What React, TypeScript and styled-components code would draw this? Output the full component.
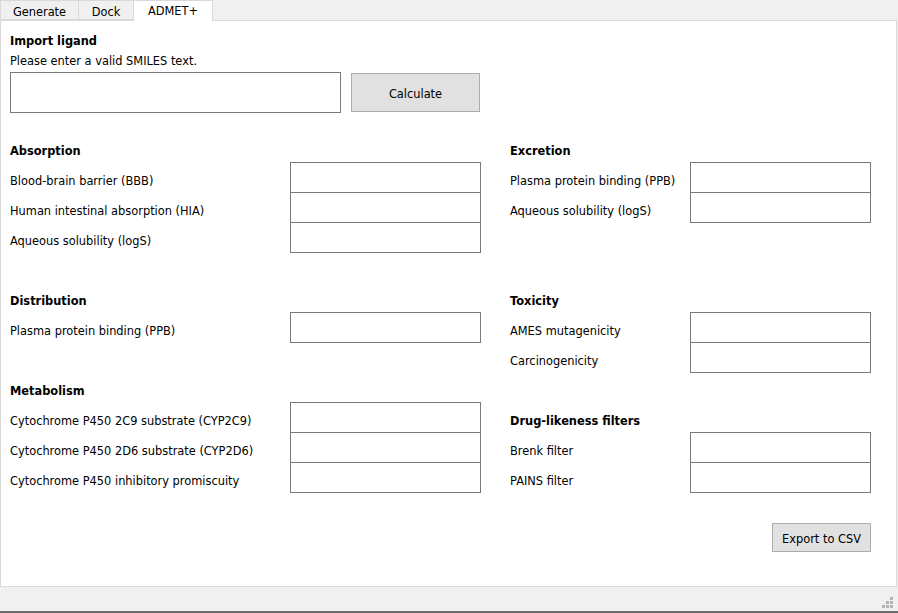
import React from "react";
import styled, { createGlobalStyle } from "styled-components";

const GlobalStyle = createGlobalStyle`
  html, body {
    margin: 0;
    padding: 0;
    background: #f0f0f0;
  }
  body {
    font-family: "DejaVu Sans", Verdana, sans-serif;
    font-size: 11.4px;
    color: #000;
  }
`;

type SectionData = { title: string; fields: string[]; slots?: number };

const leftSections: SectionData[] = [
  {
    title: "Absorption",
    fields: [
      "Blood-brain barrier (BBB)",
      "Human intestinal absorption (HIA)",
      "Aqueous solubility (logS)"
    ]
  },
  { title: "Distribution", fields: ["Plasma protein binding (PPB)"] },
  {
    title: "Metabolism",
    fields: [
      "Cytochrome P450 2C9 substrate (CYP2C9)",
      "Cytochrome P450 2D6 substrate (CYP2D6)",
      "Cytochrome P450 inhibitory promiscuity"
    ]
  }
];

const rightSections: SectionData[] = [
  {
    title: "Excretion",
    fields: ["Plasma protein binding (PPB)", "Aqueous solubility (logS)"],
    slots: 3
  },
  {
    title: "Toxicity",
    fields: ["AMES mutagenicity", "Carcinogenicity"]
  },
  {
    title: "Drug-likeness filters",
    fields: ["Brenk filter", "PAINS filter"]
  }
];

const tabs = [
  { name: "Generate", width: 79 },
  { name: "Dock", width: 56 },
  { name: "ADMET+", width: 80 }
];

function Section({
  data,
  labelWidth,
  boxWidth
}: {
  data: SectionData;
  labelWidth: number;
  boxWidth: number;
}) {
  return (
    <SectionBox>
      <SectionHeading>{data.title}</SectionHeading>
      <FieldList $slots={data.slots || data.fields.length}>
        {data.fields.map(f => (
          <FieldRow key={f}>
            <FieldLabel $width={labelWidth}>{f}</FieldLabel>
            <ValueBox $width={boxWidth} />
          </FieldRow>
        ))}
      </FieldList>
    </SectionBox>
  );
}

export default function App() {
  return (
    <>
      <GlobalStyle />
      <Window>
        <TabBar>
          {tabs.map(t => (
            <Tab key={t.name} $width={t.width} $active={t.name === "ADMET+"}>
              {t.name}
            </Tab>
          ))}
        </TabBar>
        <Panel>
          <Heading>Import ligand</Heading>
          <Hint>Please enter a valid SMILES text.</Hint>
          <ImportRow>
            <SmilesInput />
            <PushButton $width={129} $height={39}>
              Calculate
            </PushButton>
          </ImportRow>
          <Columns>
            <Column>
              {leftSections.map(s => (
                <Section key={s.title} data={s} labelWidth={280} boxWidth={191} />
              ))}
            </Column>
            <Column>
              {rightSections.map(s => (
                <Section key={s.title} data={s} labelWidth={180} boxWidth={181} />
              ))}
            </Column>
          </Columns>
          <Footer>
            <PushButton $width={99} $height={29}>
              Export to CSV
            </PushButton>
          </Footer>
        </Panel>
        <StatusBar>
          <Grip width="12" height="12" viewBox="0 0 12 12">
            {[
              [8, 0],
              [4, 4],
              [8, 4],
              [0, 8],
              [4, 8],
              [8, 8]
            ].map(([x, y]) => (
              <rect key={`${x}-${y}`} x={x} y={y} width="3" height="3" fill="#b4b4b4" />
            ))}
          </Grip>
        </StatusBar>
      </Window>
    </>
  );
}

const Window = styled.div`
  width: 898px;
  height: 613px;
  display: flex;
  flex-direction: column;
  background: #f0f0f0;
  overflow: hidden;
`;

const TabBar = styled.div`
  height: 20px;
  display: flex;
  align-items: stretch;
  position: relative;
  z-index: 1;
`;

const Tab = styled.div<{ $width: number; $active?: boolean }>`
  width: ${p => p.$width}px;
  box-sizing: border-box;
  display: flex;
  align-items: center;
  justify-content: center;
  padding-top: ${p => (p.$active ? "0" : "3px")};
  height: ${p => (p.$active ? "21px" : "20px")};
  background: ${p => (p.$active ? "#ffffff" : "#f0f0f0")};
  border: 1px solid #d9d9d9;
  border-bottom: ${p => (p.$active ? "none" : "1px solid #d9d9d9")};
  margin-right: -1px;
`;

const Panel = styled.div`
  width: 897px;
  height: 567px;
  box-sizing: border-box;
  background: #ffffff;
  border: 1px solid #d9d9d9;
  padding: 10px 0 0 9px;
  display: flex;
  flex-direction: column;
`;

const Heading = styled.div`
  font-weight: bold;
  height: 20px;
  line-height: 20px;
`;

const SectionHeading = styled(Heading)`
  line-height: 22px;
`;

const Hint = styled.div`
  height: 20px;
  line-height: 20px;
`;

const ImportRow = styled.div`
  display: flex;
  align-items: center;
  gap: 10px;
  margin-top: 1px;
`;

const SmilesInput = styled.div`
  width: 331px;
  height: 41px;
  box-sizing: border-box;
  border: 1px solid #7a7a7a;
  background: #fff;
`;

const PushButton = styled.div<{ $width: number; $height: number }>`
  width: ${p => p.$width}px;
  height: ${p => p.$height}px;
  box-sizing: border-box;
  background: #e1e1e1;
  border: 1px solid #adadad;
  display: flex;
  align-items: center;
  justify-content: center;
  padding-top: 2px;
`;

const Columns = styled.div`
  display: flex;
  gap: 29px;
  margin-top: 27px;
`;

const Column = styled.div`
  display: flex;
  flex-direction: column;
  gap: 38px;
`;

const SectionBox = styled.div`
  display: flex;
  flex-direction: column;
  gap: 2px;
`;

const FieldList = styled.div<{ $slots: number }>`
  min-height: ${p => p.$slots * 30}px;
`;

const FieldRow = styled.div`
  display: flex;
  align-items: flex-start;
  height: 30px;
`;

const FieldLabel = styled.div<{ $width: number }>`
  width: ${p => p.$width}px;
  height: 30px;
  padding-top: 7px;
  box-sizing: border-box;
  line-height: 24px;
  white-space: nowrap;
`;

const ValueBox = styled.div<{ $width: number }>`
  width: ${p => p.$width}px;
  height: 31px;
  box-sizing: border-box;
  border: 1px solid #7a7a7a;
  background: #fff;
  flex-shrink: 0;
`;

const Footer = styled.div`
  display: flex;
  justify-content: flex-end;
  width: 861px;
  margin-top: 31px;
`;

const StatusBar = styled.div`
  flex: 1;
  display: flex;
  justify-content: flex-end;
  align-items: flex-end;
  padding: 0 4px 2px 0;
  border-bottom: 2px solid #6e6e6e;
`;

const Grip = styled.svg`
  display: block;
`;
